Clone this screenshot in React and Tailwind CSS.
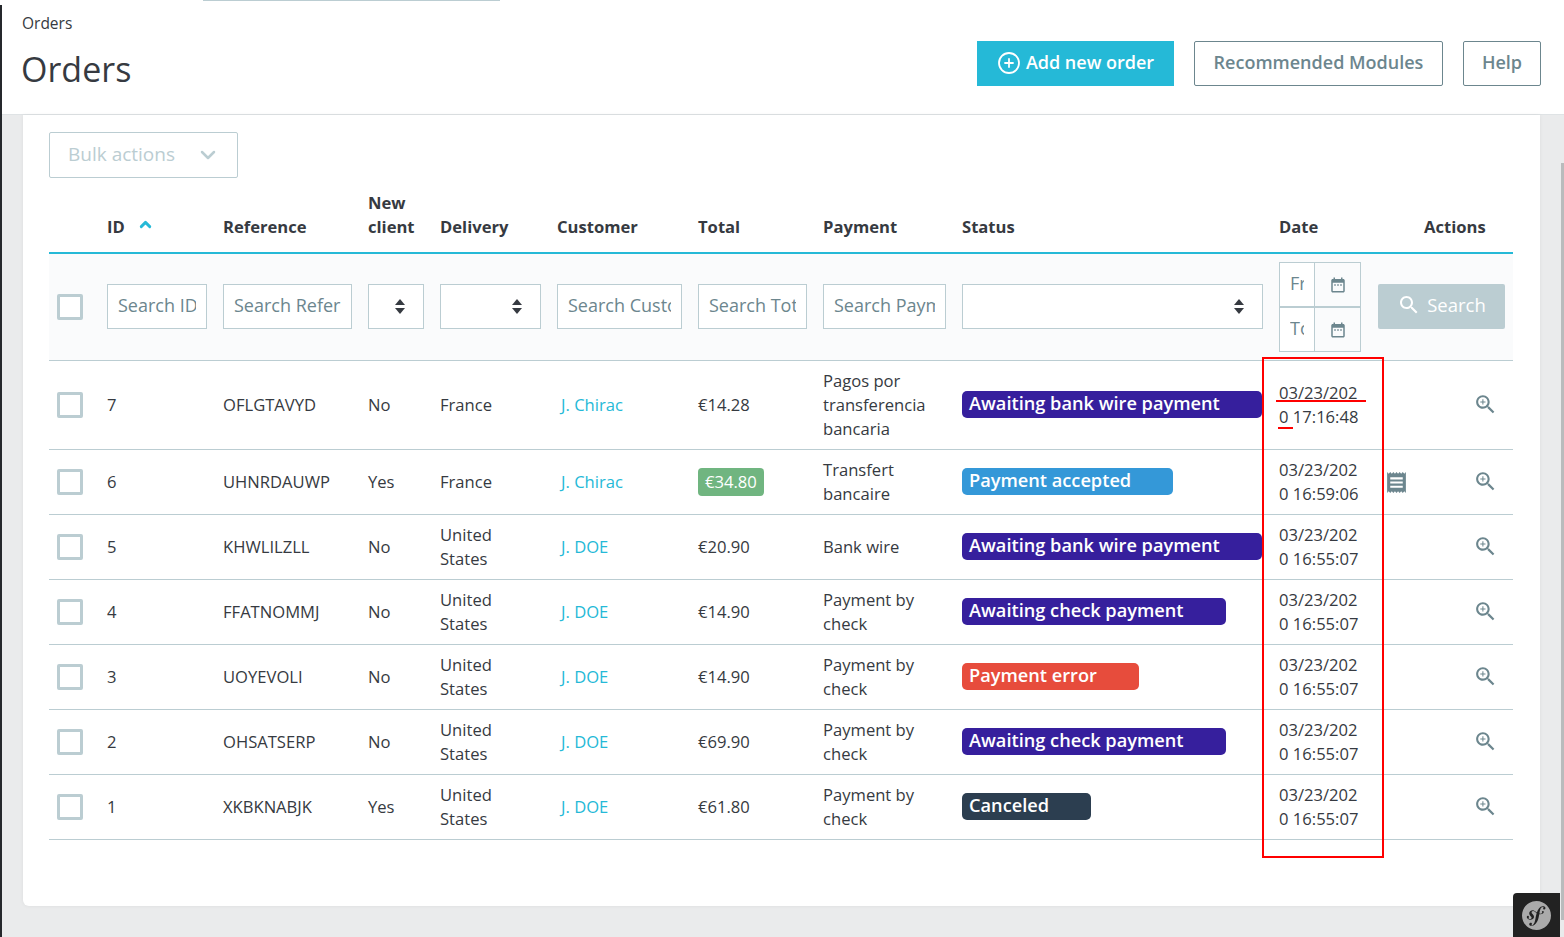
import { ChevronDown, ChevronUp, CirclePlus } from "lucide-react";
import { SiSymfony } from "react-icons/si";

const orders = [
  { id: 7, ref: "OFLGTAVYD", isNew: "No", delivery: "France", customer: "J. Chirac", total: "€14.28", payment: "Pagos por transferencia bancaria", status: "Awaiting bank wire payment", color: "bg-[#361f9d]", date: "03/23/2020 17:16:48" },
  { id: 6, ref: "UHNRDAUWP", isNew: "Yes", delivery: "France", customer: "J. Chirac", total: "€34.80", paid: true, payment: "Transfert bancaire", status: "Payment accepted", color: "bg-[#3498d8]", date: "03/23/2020 16:59:06", receipt: true },
  { id: 5, ref: "KHWLILZLL", isNew: "No", delivery: "United States", customer: "J. DOE", total: "€20.90", payment: "Bank wire", status: "Awaiting bank wire payment", color: "bg-[#361f9d]", date: "03/23/2020 16:55:07" },
  { id: 4, ref: "FFATNOMMJ", isNew: "No", delivery: "United States", customer: "J. DOE", total: "€14.90", payment: "Payment by check", status: "Awaiting check payment", color: "bg-[#361f9d]", date: "03/23/2020 16:55:07" },
  { id: 3, ref: "UOYEVOLI", isNew: "No", delivery: "United States", customer: "J. DOE", total: "€14.90", payment: "Payment by check", status: "Payment error", color: "bg-[#e74c3c]", date: "03/23/2020 16:55:07" },
  { id: 2, ref: "OHSATSERP", isNew: "No", delivery: "United States", customer: "J. DOE", total: "€69.90", payment: "Payment by check", status: "Awaiting check payment", color: "bg-[#361f9d]", date: "03/23/2020 16:55:07" },
  { id: 1, ref: "XKBKNABJK", isNew: "Yes", delivery: "United States", customer: "J. DOE", total: "€61.80", payment: "Payment by check", status: "Canceled", color: "bg-[#2c3e50]", date: "03/23/2020 16:55:07" },
];

const Checkbox = () => <div className="w-[26px] h-[26px] border-[3px] border-[#bbcdd2] rounded-[2px] bg-white" />;

const SortArrows = () => (
  <svg width="12" height="15" viewBox="0 0 12 15" fill="#363a41">
    <path d="M6 0l5 6H1z" />
    <path d="M6 15l5-6H1z" />
  </svg>
);

const CalendarIcon = () => (
  <svg width="18" height="18" viewBox="0 0 24 24" fill="#6c868e">
    <path d="M9 11H7v2h2v-2zm4 0h-2v2h2v-2zm4 0h-2v2h2v-2zm2-7h-1V2h-2v2H8V2H6v2H5c-1.11 0-1.99.9-1.99 2L3 20c0 1.1.89 2 2 2h14c1.1 0 2-.9 2-2V6c0-1.1-.9-2-2-2zm0 16H5V9h14v11z" />
  </svg>
);

const ReceiptIcon = () => (
  <svg width="25" height="25" viewBox="0 0 24 24" fill="#6c868e">
    <path d="M18 17H6v-2h12v2zm0-4H6v-2h12v2zm0-4H6V7h12v2zM3 22l1.5-1.5L6 22l1.5-1.5L9 22l1.5-1.5L12 22l1.5-1.5L15 22l1.5-1.5L18 22l1.5-1.5L21 22V2l-1.5 1.5L18 2l-1.5 1.5L15 2l-1.5 1.5L12 2l-1.5 1.5L9 2 7.5 3.5 6 2 4.5 3.5 3 2v20z" />
  </svg>
);

const MagnifierIcon = ({ plus, fill = "#6c868e", size = 24, className }) => (
  <svg width={size} height={size} viewBox="0 0 24 24" fill={fill} className={className}>
    <path d="M15.5 14h-.79l-.28-.27C15.41 12.59 16 11.11 16 9.5 16 5.91 13.09 3 9.5 3S3 5.91 3 9.5 5.91 16 9.5 16c1.61 0 3.09-.59 4.23-1.57l.27.28v.79l5 4.99L20.49 19l-4.99-5zm-6 0C7.01 14 5 11.99 5 9.5S7.01 5 9.5 5 14 7.01 14 9.5 11.99 14 9.5 14z" />
    {plus && <path d="M12 10h-2v2H9v-2H7V9h2V7h1v2h2v1z" />}
  </svg>
);

const TextFilter = ({ placeholder }) => (
  <input
    placeholder={placeholder}
    className="block w-full h-[45px] -mt-[2px] px-[10px] pb-[3px] bg-white border border-[#bbcdd2] text-[18px] outline-none placeholder:text-[#6c868e]"
  />
);

const SelectFilter = () => (
  <div className="w-full h-[45px] -mt-[2px] pr-[17px] flex items-center justify-end bg-white border border-[#bbcdd2]">
    <SortArrows />
  </div>
);

const DateFilter = ({ placeholder }) => (
  <div className="flex h-[45px]">
    <input
      placeholder={placeholder}
      className="w-[36px] min-w-0 px-[10px] pb-[3px] bg-white border border-[#bbcdd2] text-[18px] outline-none placeholder:text-[#6c868e]"
    />
    <div className="w-[47px] -ml-px flex items-center justify-center border border-[#bbcdd2]">
      <CalendarIcon />
    </div>
  </div>
);

const headers = [
  ["", "w-[50px]"],
  ["ID", "w-[116px]"],
  ["Reference", "w-[145px]"],
  ["New client", "w-[72px]"],
  ["Delivery", "w-[117px]"],
  ["Customer", "w-[141px]"],
  ["Total", "w-[125px]"],
  ["Payment", "w-[139px]"],
  ["Status", "w-[317px]"],
  ["Date", "w-[99px]"],
  ["Actions", "w-[143px]"],
];

export default function App() {
  return (
    <div className="relative h-[937px] overflow-hidden bg-[#eaebec] text-[#363a41] text-[16.6px] leading-[24px] font-['Open_Sans',sans-serif]">
      <div className="absolute left-0 top-[5px] bottom-0 w-[2px] bg-[#25282c]" />
      <div className="absolute left-[203px] top-0 w-[297px] h-[1px] bg-[#bbcdd2]" />
      <div className="absolute right-0 top-[163px] h-[757px] w-[3px] bg-[#b9bbbc]" />

      <header className="h-[115px] pl-[22px] pr-[23px] flex justify-between bg-white border-b border-[#dfe3e5]">
        <div>
          <div className="mt-[13px] text-[15.5px] leading-[21px]">Orders</div>
          <h1 className="mt-[11px] -ml-px text-[34px] leading-[48px] font-normal">Orders</h1>
        </div>
        <div className="mt-[41px] flex gap-[20px] text-[18px] font-semibold">
          <button className="w-[197px] h-[45px] pb-[3px] flex items-center justify-center gap-[5px] bg-[#25b9d7] text-white">
            <CirclePlus size={24} strokeWidth={1.8} className="mt-[2px]" />
            Add new order
          </button>
          <button className="w-[249px] h-[45px] pb-[3px] border border-[#6c868e] rounded-[2px] text-[#6c868e]">Recommended Modules</button>
          <button className="w-[78px] h-[45px] pb-[3px] border border-[#6c868e] rounded-[2px] text-[#6c868e]">Help</button>
        </div>
      </header>

      <main className="ml-[23px] mr-[24px] h-[791px] px-[26px] pt-[17px] bg-white rounded-b-[6px] shadow-[0_0_4px_rgba(0,0,0,0.06)]">
        <div className="w-[189px] h-[46px] pl-[18px] pr-[17px] pb-[2px] flex items-center justify-between border border-[#bbcdd2] rounded-[2px] text-[19px] font-medium text-[#bbcdd2]">
          Bulk actions
          <ChevronDown size={24} strokeWidth={2.5} className="mt-[2px]" />
        </div>

        <table className="mt-[13px] w-[1464px] table-fixed border-collapse">
          <thead>
            <tr className="border-b-2 border-[#25b9d7]">
              {headers.map(([label, width]) => (
                <th key={label} className={`${width} px-2 pb-[13px] align-bottom text-left font-bold ${label === "Actions" ? "pl-[54px] pr-0" : ""}`}>
                  {label === "ID" ? (
                    <span className="flex items-center gap-[12px]">
                      ID <ChevronUp size={17} strokeWidth={4} className="text-[#25b9d7] -mt-[5px]" />
                    </span>
                  ) : label}
                </th>
              ))}
            </tr>
            <tr className="bg-[#fafbfc] border-b border-[#bbcdd2]">
              <th className="px-2 py-2"><Checkbox /></th>
              <th className="px-2 font-normal"><TextFilter placeholder="Search ID" /></th>
              <th className="px-2 font-normal"><TextFilter placeholder="Search Reference" /></th>
              <th className="px-2"><SelectFilter /></th>
              <th className="px-2"><SelectFilter /></th>
              <th className="px-2 font-normal"><TextFilter placeholder="Search Customer" /></th>
              <th className="px-2 font-normal"><TextFilter placeholder="Search Total" /></th>
              <th className="px-2 font-normal"><TextFilter placeholder="Search Payment" /></th>
              <th className="px-2"><SelectFilter /></th>
              <th className="pl-2 py-2 font-normal">
                <div className="w-[82px]">
                  <DateFilter placeholder="From" />
                  <DateFilter placeholder="To" />
                </div>
              </th>
              <th className="pr-2 font-normal">
                <button className="ml-auto -mt-[2px] w-[127px] h-[45px] pb-[2px] flex items-center justify-center gap-[6px] bg-[#bbcdd2] rounded-[2px] text-white text-[18.5px] font-medium">
                  <MagnifierIcon fill="#ffffff" />
                  Search
                </button>
              </th>
            </tr>
          </thead>
          <tbody>
            {orders.map((order) => (
              <tr key={order.id} className="border-b border-[#bbcdd2]">
                <td className="p-2"><Checkbox /></td>
                <td className="p-2">{order.id}</td>
                <td className="p-2">{order.ref}</td>
                <td className="p-2">{order.isNew}</td>
                <td className="p-2">{order.delivery}</td>
                <td className="p-2 pl-[12px] text-[#25b9d7]">{order.customer}</td>
                <td className="p-2">
                  {order.paid ? (
                    <span className="inline-block px-[7px] py-[2px] rounded-[4px] bg-[#70b580] text-white font-medium">{order.total}</span>
                  ) : order.total}
                </td>
                <td className="p-2">{order.payment}</td>
                <td className="p-2">
                  <div className={`${order.color} w-fit -mt-[2px] pl-[7px] pr-[42px] pb-[2px] rounded-[5px] text-white text-[18.2px] font-semibold leading-[25px] whitespace-nowrap`}>{order.status}</div>
                </td>
                <td className="p-2 break-all">{order.date}</td>
                <td className="p-2">
                  <div className="flex items-center justify-between pl-[6px] pr-[7px]">
                    <span className="w-[25px]">{order.receipt && <ReceiptIcon />}</span>
                    <MagnifierIcon plus size={25} className="mb-[2px]" />
                  </div>
                </td>
              </tr>
            ))}
          </tbody>
        </table>
      </main>

      {/* annotation drawn on the screenshot */}
      <div className="absolute left-[1262px] top-[357px] w-[122px] h-[501px] border-2 border-[#ff0000]" />
      <div className="absolute left-[1276px] top-[400px] w-[90px] h-[2px] bg-[#ff0000]" />
      <div className="absolute left-[1278px] top-[427px] w-[15px] h-[2px] bg-[#ff0000]" />

      <div className="absolute left-[1513px] top-[893px] w-[47px] h-[44px] flex items-center justify-center bg-[#222222] rounded-tl-[4px]">
        <SiSymfony size={29} className="text-[#aaaaaa]" />
      </div>
    </div>
  );
}
